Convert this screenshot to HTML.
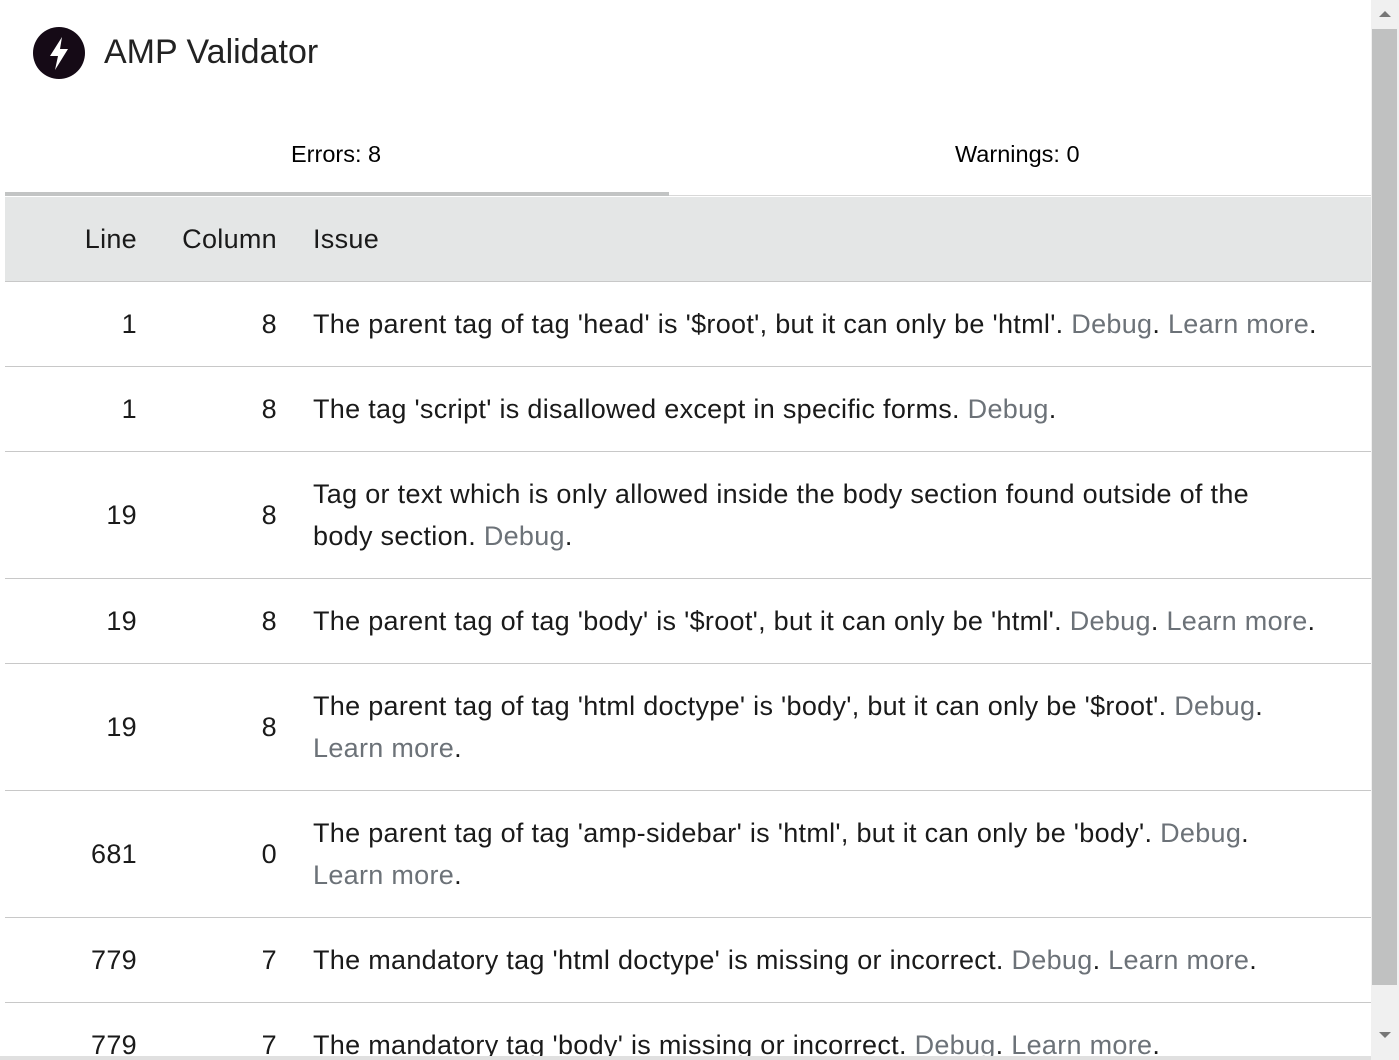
<!DOCTYPE html>
<html style="overflow:hidden;height:1060px"><head><style>
body{margin:0;width:1399px;height:1060px;overflow:hidden;background:#fff;font-family:"Liberation Sans",sans-serif;color:#1a1a1a;position:relative}
.title{position:absolute;left:104px;top:33px;font-size:34px;color:#222}
.logo{position:absolute;left:33px;top:27px;width:52px;height:52px;border-radius:50%;background:#150a16}
.tab{position:absolute;top:141px;font-size:23.5px;color:#000}
.ul{position:absolute;left:5px;top:192px;width:664px;height:4px;background:#c2c4c4}
.hl{position:absolute;left:669px;top:195px;width:702px;height:1px;background:#d8d8d8}
.clip{position:absolute;left:0;top:0;width:1399px;height:1056px;overflow:hidden}
.row{position:absolute;left:5px;width:1366px;border-bottom:1px solid #c8c8c8;font-size:27px;letter-spacing:0.3px;display:flex;align-items:center;box-sizing:border-box}
.a{position:absolute;right:1234px;}
.b{position:absolute;right:1094px;}
.i{position:absolute;left:308px;line-height:42px;white-space:nowrap}
.hd{background:#e4e6e6}
a{color:#6c7278;text-decoration:none}
.sb{position:absolute;left:1371px;top:0;width:28px;height:1060px;background:#f0f0f0}
.th{position:absolute;left:1372px;top:29px;width:25px;height:956px;background:#c0c1c1}
.bb{position:absolute;left:0;top:1056px;width:1371px;height:4px;background:#e0e0e0}
</style></head><body>
<div class="logo"><svg width="52" height="52" viewBox="0 0 52 52"><path d="M29 10 L17 29 H25 L22 43 L35 22 H27 Z" fill="#fff"/></svg></div>
<div class="title">AMP Validator</div>
<div class="tab" style="left:291px">Errors: 8</div>
<div class="tab" style="left:955px">Warnings: 0</div>
<div class="ul"></div><div class="hl"></div>
<div class="clip">
<div class="row hd" style="top:197px;height:85px"><span class="a">Line</span><span class="b">Column</span><span class="i">Issue</span></div>
<div class="row" style="top:282px;height:85px"><span class="a">1</span><span class="b">8</span><span class="i">The parent tag of tag 'head' is '$root', but it can only be 'html'. <a>Debug</a>. <a>Learn more</a>.</span></div>
<div class="row" style="top:367px;height:85px"><span class="a">1</span><span class="b">8</span><span class="i">The tag 'script' is disallowed except in specific forms. <a>Debug</a>.</span></div>
<div class="row" style="top:452px;height:127px"><span class="a">19</span><span class="b">8</span><span class="i">Tag or text which is only allowed inside the body section found outside of the<br>body section. <a>Debug</a>.</span></div>
<div class="row" style="top:579px;height:85px"><span class="a">19</span><span class="b">8</span><span class="i">The parent tag of tag 'body' is '$root', but it can only be 'html'. <a>Debug</a>. <a>Learn more</a>.</span></div>
<div class="row" style="top:664px;height:127px"><span class="a">19</span><span class="b">8</span><span class="i">The parent tag of tag 'html doctype' is 'body', but it can only be '$root'. <a>Debug</a>.<br><a>Learn more</a>.</span></div>
<div class="row" style="top:791px;height:127px"><span class="a">681</span><span class="b">0</span><span class="i">The parent tag of tag 'amp-sidebar' is 'html', but it can only be 'body'. <a>Debug</a>.<br><a>Learn more</a>.</span></div>
<div class="row" style="top:918px;height:85px"><span class="a">779</span><span class="b">7</span><span class="i">The mandatory tag 'html doctype' is missing or incorrect. <a>Debug</a>. <a>Learn more</a>.</span></div>
<div class="row" style="top:1003px;height:85px"><span class="a">779</span><span class="b">7</span><span class="i">The mandatory tag 'body' is missing or incorrect. <a>Debug</a>. <a>Learn more</a>.</span></div>
</div>
<div class="bb"></div>
<div class="sb"></div><div class="th"></div>
<div style="position:absolute;left:1379px;top:11px;width:0;height:0;border-left:6px solid transparent;border-right:6px solid transparent;border-bottom:6px solid #777"></div>
<div style="position:absolute;left:1379px;top:1032px;width:0;height:0;border-left:6px solid transparent;border-right:6px solid transparent;border-top:6px solid #777"></div>
</body></html>
